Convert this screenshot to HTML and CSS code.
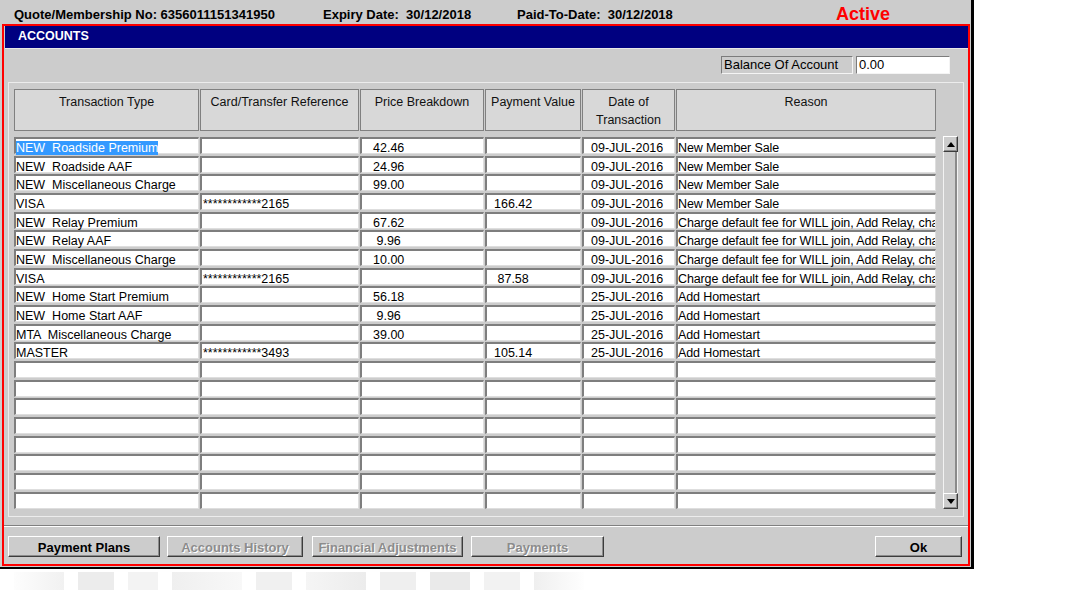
FILE: index.html
```html
<!DOCTYPE html>
<html>
<head>
<meta charset="utf-8">
<title>Accounts</title>
<link rel="stylesheet" href="styles.css">
</head>
<body>
<div class="window">
  <div class="topbar">
    <span class="tb tb-quote">Quote/Membership No: 6356011151341950</span>
    <span class="tb tb-exp">Expiry Date:  30/12/2018</span>
    <span class="tb tb-paid">Paid-To-Date:  30/12/2018</span>
    <span class="status">Active</span>
  </div>
  <div class="frame">
    <div class="titlebar">ACCOUNTS</div>
    <div class="balance">
      <div class="bal-label">Balance Of Account</div>
      <div class="bal-input">0.00</div>
    </div>
    <div class="panel">
      <div class="grid">
        <div class="hdr">
          <div class="hcell">Transaction Type</div>
          <div class="hcell">Card/Transfer Reference</div>
          <div class="hcell">Price Breakdown</div>
          <div class="hcell">Payment Value</div>
          <div class="hcell">Date of<br>Transaction</div>
          <div class="hcell">Reason</div>
        </div>
        <div class="rows">
          <div class="row"><div class="cell c-type"><span class="sel">NEW  Roadside Premium</span></div><div class="cell c-card"></div><div class="cell c-price">42.46</div><div class="cell c-pay"></div><div class="cell c-date">09-JUL-2016</div><div class="cell c-reason">New Member Sale</div></div>
          <div class="row"><div class="cell c-type">NEW  Roadside AAF</div><div class="cell c-card"></div><div class="cell c-price">24.96</div><div class="cell c-pay"></div><div class="cell c-date">09-JUL-2016</div><div class="cell c-reason">New Member Sale</div></div>
          <div class="row"><div class="cell c-type">NEW  Miscellaneous Charge</div><div class="cell c-card"></div><div class="cell c-price">99.00</div><div class="cell c-pay"></div><div class="cell c-date">09-JUL-2016</div><div class="cell c-reason">New Member Sale</div></div>
          <div class="row"><div class="cell c-type">VISA</div><div class="cell c-card">************2165</div><div class="cell c-price"></div><div class="cell c-pay">166.42</div><div class="cell c-date">09-JUL-2016</div><div class="cell c-reason">New Member Sale</div></div>
          <div class="row"><div class="cell c-type">NEW  Relay Premium</div><div class="cell c-card"></div><div class="cell c-price">67.62</div><div class="cell c-pay"></div><div class="cell c-date">09-JUL-2016</div><div class="cell c-reason">Charge default fee for WILL join, Add Relay, cha</div></div>
          <div class="row"><div class="cell c-type">NEW  Relay AAF</div><div class="cell c-card"></div><div class="cell c-price"> 9.96</div><div class="cell c-pay"></div><div class="cell c-date">09-JUL-2016</div><div class="cell c-reason">Charge default fee for WILL join, Add Relay, cha</div></div>
          <div class="row"><div class="cell c-type">NEW  Miscellaneous Charge</div><div class="cell c-card"></div><div class="cell c-price">10.00</div><div class="cell c-pay"></div><div class="cell c-date">09-JUL-2016</div><div class="cell c-reason">Charge default fee for WILL join, Add Relay, cha</div></div>
          <div class="row"><div class="cell c-type">VISA</div><div class="cell c-card">************2165</div><div class="cell c-price"></div><div class="cell c-pay"> 87.58</div><div class="cell c-date">09-JUL-2016</div><div class="cell c-reason">Charge default fee for WILL join, Add Relay, cha</div></div>
          <div class="row"><div class="cell c-type">NEW  Home Start Premium</div><div class="cell c-card"></div><div class="cell c-price">56.18</div><div class="cell c-pay"></div><div class="cell c-date">25-JUL-2016</div><div class="cell c-reason">Add Homestart</div></div>
          <div class="row"><div class="cell c-type">NEW  Home Start AAF</div><div class="cell c-card"></div><div class="cell c-price"> 9.96</div><div class="cell c-pay"></div><div class="cell c-date">25-JUL-2016</div><div class="cell c-reason">Add Homestart</div></div>
          <div class="row"><div class="cell c-type">MTA  Miscellaneous Charge</div><div class="cell c-card"></div><div class="cell c-price">39.00</div><div class="cell c-pay"></div><div class="cell c-date">25-JUL-2016</div><div class="cell c-reason">Add Homestart</div></div>
          <div class="row"><div class="cell c-type">MASTER</div><div class="cell c-card">************3493</div><div class="cell c-price"></div><div class="cell c-pay">105.14</div><div class="cell c-date">25-JUL-2016</div><div class="cell c-reason">Add Homestart</div></div>
          <div class="row"><div class="cell"></div><div class="cell"></div><div class="cell"></div><div class="cell"></div><div class="cell"></div><div class="cell"></div></div>
          <div class="row"><div class="cell"></div><div class="cell"></div><div class="cell"></div><div class="cell"></div><div class="cell"></div><div class="cell"></div></div>
          <div class="row"><div class="cell"></div><div class="cell"></div><div class="cell"></div><div class="cell"></div><div class="cell"></div><div class="cell"></div></div>
          <div class="row"><div class="cell"></div><div class="cell"></div><div class="cell"></div><div class="cell"></div><div class="cell"></div><div class="cell"></div></div>
          <div class="row"><div class="cell"></div><div class="cell"></div><div class="cell"></div><div class="cell"></div><div class="cell"></div><div class="cell"></div></div>
          <div class="row"><div class="cell"></div><div class="cell"></div><div class="cell"></div><div class="cell"></div><div class="cell"></div><div class="cell"></div></div>
          <div class="row"><div class="cell"></div><div class="cell"></div><div class="cell"></div><div class="cell"></div><div class="cell"></div><div class="cell"></div></div>
          <div class="row"><div class="cell"></div><div class="cell"></div><div class="cell"></div><div class="cell"></div><div class="cell"></div><div class="cell"></div></div>
        </div>
      </div>
      <div class="scroll">
        <div class="sbtn"><svg width="8" height="5" viewBox="0 0 8 5"><polygon points="4,0 8,5 0,5" fill="#000"/></svg></div>
        <div class="strack"></div>
        <div class="sbtn"><svg width="8" height="5" viewBox="0 0 8 5"><polygon points="0,0 8,0 4,5" fill="#000"/></svg></div>
      </div>
    </div>
    <div class="sep"></div>
    <div class="buttons">
      <div class="btn b-plans">Payment Plans</div>
      <div class="btn b-hist disabled">Accounts History</div>
      <div class="btn b-fin disabled">Financial Adjustments</div>
      <div class="btn b-pay disabled">Payments</div>
      <div class="btn b-ok">Ok</div>
    </div>
  </div>
</div>
<div class="watermark">
  <span class="wm w1"></span><span class="wm w2"></span><span class="wm w3"></span><span class="wm w4"></span><span class="wm w5"></span><span class="wm w6"></span><span class="wm w7"></span><span class="wm w8"></span><span class="wm w9"></span><span class="wm w10"></span>
</div>
</body>
</html>
```

FILE: styles.css
```css
* { box-sizing: border-box; }
html, body { margin: 0; padding: 0; background: #ffffff; }
body {
  font-family: "Liberation Sans", Arial, sans-serif;
  width: 1070px;
  height: 590px;
  overflow: hidden;
  color: #000;
}

.window {
  width: 974px;
  height: 569px;
  background: #cccccc;
  border-right: 3px solid #000;
  border-bottom: 2px solid #000;
  display: flex;
  flex-direction: column;
}

/* top info bar */
.topbar {
  height: 24px;
  flex: none;
  display: flex;
  align-items: flex-start;
  padding-left: 14px;
  font-weight: bold;
  font-size: 13px;
}
.tb { margin-top: 7px; line-height: 15px; white-space: pre; }
.tb-quote { width: 309px; }
.tb-exp { width: 194px; }
.tb-paid { width: 319px; }
.status {
  margin-top: 5px;
  font-size: 18px;
  line-height: 18px;
  color: #ff0000;
}

/* red frame */
.frame {
  margin-left: 2px;
  width: 968px;
  height: 542px;
  border: 2px solid #ff0000;
  display: flex;
  flex-direction: column;
}
.titlebar {
  flex: none;
  margin: 0 0 0 1px;
  height: 23px;
  background: #000080;
  border-bottom: 1px solid #e8e8e8;
  color: #fff;
  font-weight: bold;
  font-size: 12.5px;
  line-height: 20px;
  padding-left: 13px;
}

.balance {
  flex: none;
  margin-top: 7px;
  height: 18px;
  display: flex;
  justify-content: flex-end;
  gap: 3px;
  padding-right: 18px;
  font-size: 13px;
}
.bal-label, .bal-input {
  height: 18px;
  border: 1px solid;
  border-color: #7c7c7c #f4f4f4 #f4f4f4 #7c7c7c;
  padding: 0 0 0 2px;
  line-height: 16px;
  overflow: hidden;
  white-space: nowrap;
}
.bal-label { width: 132px; background: #cccccc; }
.bal-input { width: 94px; background: #ffffff; }

/* grid panel */
.panel {
  flex: none;
  margin: 8px 4px 0;
  height: 435px;
  border: 1px solid #ececec;
  padding: 6px 5px 0 5px;
  display: flex;
  gap: 7px;
}
.grid { width: 922px; display: flex; flex-direction: column; }
.hdr, .row {
  display: grid;
  grid-template-columns: 185px 159px 124px 96px 93px 260px;
  column-gap: 1px;
}
.hdr { height: 42px; }
.hcell {
  background: #d8d8d8;
  border: 1px solid #808080;
  text-align: center;
  padding-top: 3px;
  line-height: 18px;
  font-size: 12.5px;
  color: #111;
}
.rows {
  margin-top: 6px;
  display: flex;
  flex-direction: column;
  gap: 1.68px;
}
.row { height: 17px; }
.cell {
  height: 17px;
  background: #ffffff;
  border-style: solid;
  border-width: 2px 1px 1px 2px;
  border-color: #7e7e7e #dedede #dedede #7e7e7e;
  font-size: 12.5px;
  line-height: 18px;
  white-space: pre;
  overflow-x: clip;
  overflow-y: visible;
  color: #000;
}
.c-type { padding-left: 0; }
.c-card { padding-left: 1px; }
.c-price { padding-left: 11px; }
.c-pay { padding-left: 7px; }
.c-date { padding-left: 7px; }
.c-reason { padding-left: 0; letter-spacing: -0.12px; }
.sel { background: #3399ff; color: #ffffff; }

/* scrollbar */
.scroll {
  width: 16px;
  margin-top: 47px;
  height: 373px;
  display: flex;
  flex-direction: column;
}
.sbtn {
  flex: none;
  height: 16px;
  background: #cccccc;
  border: 1px solid;
  border-color: #ffffff #3c3c3c #3c3c3c #ffffff;
  box-shadow: inset -1px -1px 0 #8c8c8c;
  display: flex;
  align-items: center;
  justify-content: center;
}
.strack {
  flex: 1;
  background: #cccccc;
  border-left: 1px solid #f2f2f2;
  border-right: 1px solid #f2f2f2;
  box-shadow: inset -2px 0 0 #8a8a8a;
}

.sep {
  flex: none;
  margin-top: 8px;
  height: 2px;
  border-top: 1px solid #808080;
  border-bottom: 1px solid #ffffff;
}

/* buttons */
.buttons {
  flex: none;
  margin-top: 9px;
  height: 21px;
  display: flex;
  padding: 0 6px 0 4px;
}
.btn {
  height: 21px;
  background: #cccccc;
  border: 1px solid;
  border-color: #ffffff #3c3c3c #3c3c3c #ffffff;
  box-shadow: inset -1px -1px 0 #8c8c8c;
  font-weight: bold;
  font-size: 13px;
  line-height: 17px;
  padding-top: 2px;
  text-align: center;
  white-space: nowrap;
}
.disabled { color: #8c8c8c; text-shadow: 1px 1px 0 #ffffff; }
.b-plans { width: 152px; }
.b-hist { width: 136px; margin-left: 7px; }
.b-fin { width: 151px; margin-left: 9px; }
.b-pay { width: 133px; margin-left: 8px; }
.b-ok { width: 87px; margin-left: auto; }

/* faint watermark below window */
.watermark {
  height: 21px;
  display: flex;
  align-items: flex-end;
  padding-left: 14px;
  gap: 14px;
}
.wm { display: block; height: 18px; }
.w1 { width: 50px; background: linear-gradient(90deg, #fdfdfd, #f1f1f1); }
.w2 { width: 36px; background: #ececec; }
.w3 { width: 30px; background: #f3f3f3; }
.w4 { width: 70px; background: linear-gradient(90deg, #efefef, #f8f8f8); }
.w5 { width: 36px; background: #f0f0f0; }
.w6 { width: 60px; background: linear-gradient(90deg, #f5f5f5, #ececec); }
.w7 { width: 36px; background: #efefef; }
.w8 { width: 40px; background: #eaeaea; }
.w9 { width: 36px; background: #f2f2f2; }
.w10 { width: 50px; background: linear-gradient(90deg, #efefef, #fefefe); }
```
